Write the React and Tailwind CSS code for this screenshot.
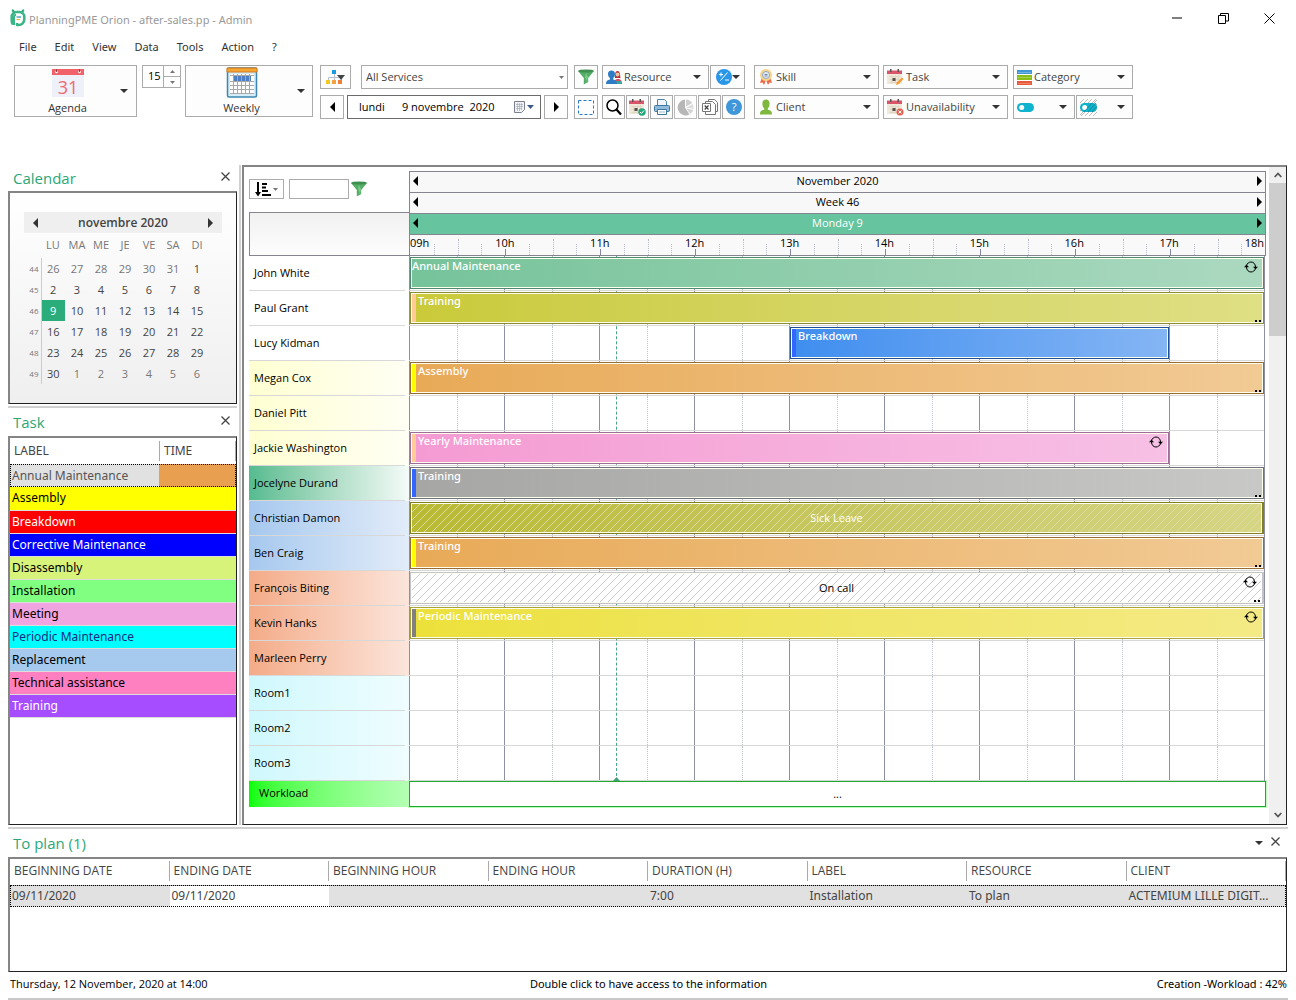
import { useState } from 'react'

const tasks = [
  { label: 'Assembly', row: 'bg-[#ffff00] text-black' },
  { label: 'Breakdown', row: 'bg-[#ff0000] text-white' },
  { label: 'Corrective Maintenance', row: 'bg-[#0000ff] text-white' },
  { label: 'Disassembly', row: 'bg-[#d7f37a] text-black' },
  { label: 'Installation', row: 'bg-[#80ff80] text-black' },
  { label: 'Meeting', row: 'bg-[#f0a5e0] text-black' },
  { label: 'Periodic Maintenance', row: 'bg-[#00ffff] text-[#1a2a80]' },
  { label: 'Replacement', row: 'bg-[#a6c9ee] text-black' },
  { label: 'Technical assistance', row: 'bg-[#ff80c0] text-black' },
  { label: 'Training', row: 'bg-[#a64dff] text-white' },
]

const weeks = [
  { n: 44, days: [26, 27, 28, 29, 30, 31, 1] },
  { n: 45, days: [2, 3, 4, 5, 6, 7, 8] },
  { n: 46, days: [9, 10, 11, 12, 13, 14, 15] },
  { n: 47, days: [16, 17, 18, 19, 20, 21, 22] },
  { n: 48, days: [23, 24, 25, 26, 27, 28, 29] },
  { n: 49, days: [30, 1, 2, 3, 4, 5, 6] },
]

const yellow = 'bg-linear-to-r from-[#ffffd2] to-[#fffff4]'
const blue = 'bg-linear-to-r from-[#a6c8ee] to-[#e2ecf9]'
const orange = 'bg-linear-to-r from-[#f3ab88] to-[#fbe5db]'
const cyan = 'bg-linear-to-r from-[#cff8fd] to-[#effdff]'

// start and end are hours of the day
const resources = [
  { name: 'John White', bg: 'bg-white', bar: { label: 'Annual Maintenance', start: 9, end: 18, box: 'border-[#4f8a70]', fill: 'from-[#76c39a] to-[#abd9c0]', repeat: true } },
  { name: 'Paul Grant', bg: 'bg-white', bar: { label: 'Training', start: 9, end: 18, box: 'border-[#8c8c32]', fill: 'from-[#caca3a] to-[#dfdf84]', strip: 'bg-[#ffcc99]', dots: true } },
  { name: 'Lucy Kidman', bg: 'bg-white', bar: { label: 'Breakdown', start: 13, end: 17, box: 'border-[#1f4f96]', fill: 'from-[#3f8eef] to-[#84b5f4]', strip: 'bg-[#3366ff]' } },
  { name: 'Megan Cox', bg: yellow, bar: { label: 'Assembly', start: 9, end: 18, box: 'border-[#996b35]', fill: 'from-[#e8aa57] to-[#f1ca94]', strip: 'bg-[#ffff00]', dots: true } },
  { name: 'Daniel Pitt', bg: yellow },
  { name: 'Jackie Washington', bg: yellow, bar: { label: 'Yearly Maintenance', start: 9, end: 17, box: 'border-[#a06c98]', fill: 'from-[#f49bd3] to-[#f7c0e5]', strip: 'bg-[#ffcc99]', repeat: true } },
  { name: 'Jocelyne Durand', bg: 'bg-linear-to-r from-[#55bb90] to-[#f4fbf8]', bar: { label: 'Training', start: 9, end: 18, box: 'border-[#70707a]', fill: 'from-[#a6a6a5] to-[#c8c8c7]', strip: 'bg-[#3366ff]', dots: true } },
  { name: 'Christian Damon', bg: blue, bar: { label: 'Sick Leave', start: 9, end: 18, box: 'border-[#808022] border-r-2', fill: 'from-[#b9b932] to-[#d5d584]', hatch: '#dcdca0', text: 'text-white' } },
  { name: 'Ben Craig', bg: blue, bar: { label: 'Training', start: 9, end: 18, box: 'border-[#996b35]', fill: 'from-[#e8aa57] to-[#f1ca94]', strip: 'bg-[#ffff00]', dots: true } },
  { name: 'François Biting', bg: orange, bar: { label: 'On call', start: 9, end: 18, box: 'border-[#c4c4c8] border-r-2', fill: 'from-white to-white', hatch: '#cbcbcb', text: 'text-black', repeat: true, dots: true } },
  { name: 'Kevin Hanks', bg: orange, bar: { label: 'Periodic Maintenance', start: 9, end: 18, box: 'border-[#aaa43c]', fill: 'from-[#ece13a] to-[#f4ea85]', strip: 'bg-[#808080]', repeat: true } },
  { name: 'Marleen Perry', bg: orange },
  { name: 'Room1', bg: cyan },
  { name: 'Room2', bg: cyan },
  { name: 'Room3', bg: cyan },
]

const hours = ['09h', '10h', '11h', '12h', '13h', '14h', '15h', '16h', '17h', '18h']

const planColumns = ['BEGINNING DATE', 'ENDING DATE', 'BEGINNING HOUR', 'ENDING HOUR', 'DURATION (H)', 'LABEL', 'RESOURCE', 'CLIENT']
const planRow = ['09/11/2020', '09/11/2020', '', '', '7:00', 'Installation', 'To plan', 'ACTEMIUM LILLE DIGIT...']

/* ---------- Icons ---------- */

function Caret({ className = 'text-[#333]' }) {
  return (
    <svg width="8" height="4" viewBox="0 0 8 4" className={`shrink-0 ${className}`}>
      <path d="M0 0h8L4 4z" fill="currentColor" />
    </svg>
  )
}

function SmallCaret({ up }) {
  return (
    <svg width="5" height="3" viewBox="0 0 5 3" className="shrink-0">
      <path d={up ? 'M0 3h5L2.5 0z' : 'M0 0h5L2.5 3z'} fill="#777" />
    </svg>
  )
}

function Arrow({ dir = 'left', className = 'text-black' }) {
  return (
    <svg width="5" height="10" viewBox="0 0 5 10" className={`shrink-0 ${className}`}>
      <path d={dir === 'left' ? 'M5 0v10L0 5z' : 'M0 0v10l5-5z'} fill="currentColor" />
    </svg>
  )
}

function Close() {
  return (
    <svg width="9" height="9" viewBox="0 0 9 9">
      <path d="M.5.5l8 8M8.5.5l-8 8" stroke="#444" strokeWidth="1.3" />
    </svg>
  )
}

function AppLogo() {
  return (
    <svg width="16" height="18" viewBox="0 0 16 18">
      <path d="M2.800 1.500l1.500 2M13.200 1.500l-1.500 2" stroke="#2fae7c" strokeWidth="2.200" strokeLinecap="round" />
      <path d="M3 15.500A6.500 6.500 0 0 1 1.700 11V8a5 5 0 0 1 5-5h2.600a5 5 0 0 1 5 5v2.500a5.500 5.500 0 0 1-5.500 5.500H7v-2" fill="none" stroke="#3bb487" strokeWidth="2.600" strokeLinejoin="round" />
      <path d="M4 16V8a2 2 0 0 1 2-2" fill="none" stroke="#3bb487" strokeWidth="2" />
      <path d="M6.500 8h4.500" stroke="#2f8fae" strokeWidth="1.200" />
      <path d="M6.500 10.500h3.500" stroke="#f2b233" strokeWidth="1.200" />
    </svg>
  )
}

function AgendaIcon() {
  return (
    <svg width="32" height="29" viewBox="0 0 32 29">
      <path d="M0 5h32v23H0z" fill="#eef0fa" />
      <path d="M0 0h32v6H0z" fill="#f0616a" />
      <circle cx="4.5" cy="3" r="1.3" fill="#fff" />
      <circle cx="27.5" cy="3" r="1.3" fill="#fff" />
      <path d="M4 0h1v3H4zM27 0h1v3h-1z" fill="#a33f4a" />
      <text x="16" y="25" textAnchor="middle" fontSize="18" fill="#ee6a6c" fontFamily="'Open Sans', sans-serif">31</text>
    </svg>
  )
}

function WeeklyIcon() {
  return (
    <svg width="32" height="31" viewBox="0 0 32 31">
      <rect x="1.500" y="1" width="29" height="29" rx="1.500" fill="#d3eefa" stroke="#3e86ad" strokeWidth="1.500" />
      <path d="M1 1h30v4H1z" fill="#f6a532" stroke="#cf7a1c" />
      <path d="M4 7h24v20H4z" fill="#fff" />
      <path d="M7 9h18v5H7z" fill="#4d7fc4" />
      <path d="M4 8.500h24M4 14.500h24M4 18.500h24M4 22.500h24M4 26.500h24M7.500 7v20M11.500 7v20M15.500 7v20M19.500 7v20M23.500 7v20" stroke="#a8a8a8" />
    </svg>
  )
}

function OrgIcon() {
  return (
    <svg width="19" height="16" viewBox="0 0 19 16">
      <path d="M2.500 11V8.500h13V11M8.500 4v7" fill="none" stroke="#b4c0cc" />
      <path d="M6 1h4v4H6z" fill="#1a9be0" />
      <path d="M0 11h4v4H0z" fill="#f5c722" />
      <path d="M6 11h4v4H6z" fill="#f5a142" />
      <path d="M12 11h4v4h-4z" fill="#f07f3a" />
      <path d="M11 6h8l-4 5z" fill="#444" />
    </svg>
  )
}

function Funnel() {
  return (
    <svg width="16" height="16" viewBox="0 0 16 16">
      <path d="M0 2l5.800 7v6.500L10.200 13V9L16 2z" fill="#55ae65" />
      <ellipse cx="8" cy="2" rx="7.800" ry="1.600" fill="#3f9050" />
      <path d="M7 8l1-4 2 4-1 5z" fill="#7cc88a" />
    </svg>
  )
}

function PeopleIcon() {
  return (
    <svg width="16" height="15" viewBox="0 0 16 15">
      <path d="M9 8c0-4 0-7 2.500-7S14 4 14.500 8z" fill="#b8303f" />
      <circle cx="11.500" cy="4.500" r="2" fill="#f2c29b" />
      <path d="M8 14c0-4 2-5 4-5s4 1 4 5z" fill="#d94b5c" />
      <path d="M10 11h5v3h-5z" fill="#3aa79a" />
      <path d="M0 14c0-3 1.500-4 4-4.500V8C2.500 7 2 5.500 2 4c0-2 1.200-3.500 3.500-3.500S9 2 9 4 8.500 7 7.200 8v1.500C9.500 10 11 11 11 14z" fill="#2f7bc4" />
    </svg>
  )
}

function PlusMinusIcon() {
  return (
    <svg width="16" height="16" viewBox="0 0 16 16">
      <circle cx="8" cy="8" r="8" fill="#2a96e8" />
      <path d="M4.500 11.500l7-8M3 5.500h4M5 3.500v4M9 11h4" stroke="#fff" />
    </svg>
  )
}

function SkillIcon() {
  return (
    <svg width="16" height="16" viewBox="0 0 16 16">
      <path d="M4 8l-2 6 2.500-.5L6 16l2-5 2 5 1.500-2.500L14 14l-2-6z" fill="#ee6a4a" />
      <circle cx="8" cy="6" r="6" fill="#f6d58a" />
      <circle cx="8" cy="6" r="3.500" fill="#e9eef5" stroke="#8fa6c4" />
      <path d="M6.500 5.500h3M6.500 7h3" stroke="#6d88ad" />
    </svg>
  )
}

function ClientIcon() {
  return (
    <svg width="16" height="16" viewBox="0 0 16 16">
      <path d="M2 15.500c0-3 1-4 4.200-4.700V9.500C4.900 8.500 4.400 6.500 4.400 4.500 4.400 2 6 .5 8 .5s3.600 1.500 3.600 4c0 2-.5 4-1.800 5v1.300C13 11.500 14 12.500 14 15.500z" fill="#7fb83f" />
    </svg>
  )
}

function CalendarIcon({ badge }) {
  return (
    <svg width="17" height="17" viewBox="0 0 17 17">
      <path d="M0 4h15v11H0z" fill="#f0e8d8" />
      <path d="M0 1.500h15v3.500H0z" fill="#d9566a" />
      <path d="M3 0h1.500v3H3zM10.500 0H12v3h-1.500z" fill="#555" />
      <path d="M2.500 7.500h10M2.500 10.500h10M2.500 13.500h10M5 6.500v8M8.500 6.500v8M11.500 6.500v8" stroke="#dfd6c3" />
      <path d="M5.500 9h3v3h-3z" fill="#55514b" />
      {badge === 'pen' && <path d="M9 16l.8-2.500L15 8.500 16.500 10l-5.200 5.200z" fill="#f39a2b" />}
      {badge === 'cross' && (
        <>
          <circle cx="13" cy="13" r="3.500" fill="#e8604f" />
          <path d="M11.500 11.500l3 3M14.500 11.500l-3 3" stroke="#fff" />
        </>
      )}
      {badge === 'check' && (
        <>
          <circle cx="13" cy="13" r="3.700" fill="#27a67e" />
          <path d="M11 13l1.500 1.500 2.500-3" fill="none" stroke="#fff" />
        </>
      )}
    </svg>
  )
}

function CategoryIcon() {
  return (
    <svg width="15" height="15" viewBox="0 0 15 15">
      <path d="M0 0h15v4H0z" fill="#3f97d6" />
      <path d="M0 5h15v5H0z" fill="#8abf17" />
      <path d="M0 11h15v4H0z" fill="#e8593a" />
      <path d="M1 2.500h13M1 7.500h13M1 13.500h13" stroke="#fff" strokeOpacity=".25" />
    </svg>
  )
}

function ToggleIcon({ hatched }) {
  return (
    <svg width="17" height="17" viewBox="0 0 17 17">
      {hatched && <path d="M0 4l4-4M0 8l8-8M0 12L12 0M0 16L16 0M1 17L17 1M5 17L17 5M9 17l8-8M13 17l4-4" stroke="#aaa" strokeWidth=".8" />}
      <rect x="0" y="4" width="17" height="9" rx="4.500" fill="#10b3cd" />
      <circle cx="4.700" cy="8.500" r="2.500" fill="#fff" />
      {hatched && <path d="M4 13l8-9M8 13l8-9M12 13l5-6" stroke="#0b7f92" strokeWidth=".8" />}
    </svg>
  )
}

function SelectionIcon() {
  return (
    <svg width="16" height="15" viewBox="0 0 16 15">
      <rect x=".5" y=".5" width="15" height="14" fill="none" stroke="#2878c8" strokeDasharray="3 2" />
    </svg>
  )
}

function MagnifierIcon() {
  return (
    <svg width="16" height="17" viewBox="0 0 16 17">
      <circle cx="6.500" cy="6.500" r="5.500" fill="none" stroke="#000" strokeWidth="1.500" />
      <path d="M10.500 10.500l4.500 5" stroke="#000" strokeWidth="2.200" />
    </svg>
  )
}

function PrinterIcon() {
  return (
    <svg width="16" height="16" viewBox="0 0 16 16">
      <path d="M3.500.5h7l2 2V7h-9z" fill="#eef5fb" stroke="#4d86b0" />
      <rect x=".5" y="6.500" width="15" height="6" rx="1" fill="#8fbbdc" stroke="#40759c" />
      <path d="M3.500 10.500h9v5h-9z" fill="#fff" stroke="#40759c" />
      <path d="M5 13h6" stroke="#8fbbdc" />
    </svg>
  )
}

function PieIcon() {
  return (
    <svg width="17" height="17" viewBox="0 0 17 17">
      <path d="M8 8.500V.5a8 8 0 1 0 4.500 15z" fill="#a6a6a6" />
      <path d="M9 7.500V.5a8 8 0 0 1 6.300 3.500z" fill="#c4c4c4" />
      <path d="M9.500 8.500l6.300-3.500a8 8 0 0 1 .7 5z" fill="#d6d6d6" />
      <path d="M9.300 9.500l7 1.500a8 8 0 0 1-3 4z" fill="#c9c9c9" />
    </svg>
  )
}

function ExcelIcon() {
  return (
    <svg width="16" height="16" viewBox="0 0 16 16">
      <path d="M6.500 2V.5h6l3 3v9H14" fill="#fff" stroke="#777" />
      <path d="M3.500 5V2.500h7l3 3v10h-10V13" fill="#fff" stroke="#777" />
      <path d="M.5 4.500h8v8h-8z" fill="#fff" stroke="#777" />
      <path d="M2.700 6.500l3.800 4M6.500 6.500l-3.800 4" stroke="#444" strokeWidth="1.200" />
    </svg>
  )
}

function HelpIcon() {
  return (
    <svg width="16" height="16" viewBox="0 0 16 16">
      <circle cx="8" cy="8" r="8" fill="#3d97d8" />
      <text x="8" y="12" textAnchor="middle" fontSize="11" fill="#fff" fontFamily="'Open Sans', sans-serif">?</text>
    </svg>
  )
}

function DateIcon() {
  return (
    <svg width="20" height="12" viewBox="0 0 20 12" className="shrink-0">
      <path d="M.5.5h10v8l-3 3h-7z" fill="#f2f3f6" stroke="#7a7f8c" />
      <path d="M2 3.500h7M2 5.500h7M2 7.500h6M3.500 2v8M5.500 2v8M7.500 2v7" stroke="#a9adba" strokeWidth=".7" />
      <path d="M13 4h7l-3.500 4z" fill="#3d5a8a" />
    </svg>
  )
}

function SortIcon() {
  return (
    <svg width="16" height="15" viewBox="0 0 16 15">
      <path d="M2 0h2v10h2L3 14.500 0 10h2zM7 1h5v2H7zM7 4.500h4v2H7zM7 8h6v2H7zM7 12h9v2H7z" fill="#000" />
    </svg>
  )
}

function RepeatIcon() {
  return (
    <svg width="14" height="12" viewBox="0 0 14 12">
      <path d="M2.500 4.500C3 2.500 5 1 7 1c2.500 0 4.500 2 4.500 5M11.500 7.500C11 9.500 9 11 7 11c-2.500 0-4.500-2-4.500-5" fill="none" stroke="#000" />
      <path d="M0 6.200L2.500 3.500 5 6.200zM9 5.800h5L11.500 8.500z" fill="#000" />
    </svg>
  )
}

function Hatch({ id, color }) {
  return (
    <svg aria-hidden="true" className="absolute inset-0 size-full">
      <defs>
        <pattern id={id} width="8" height="8" patternUnits="userSpaceOnUse">
          <path d="M-1 9L9-1" stroke={color} strokeWidth="1" />
        </pattern>
      </defs>
      <rect width="100%" height="100%" fill={`url(#${id})`} />
    </svg>
  )
}

/* ---------- Toolbar pieces ---------- */

function IconButton({ label, className = 'w-6', children }) {
  return (
    <button aria-label={label} className={`flex h-6 items-center justify-center border border-[#ababab] bg-[#fdfdfd] ${className}`}>
      {children}
    </button>
  )
}

function PickList({ label, icon, className = '', text = true }) {
  return (
    <label className={`flex h-6 items-center gap-[2px] border border-[#ababab] bg-[#fdfdfd] pr-[7px] pl-[3px] ${className}`}>
      {icon}
      <select aria-label={label} className="min-w-0 flex-1 appearance-none bg-transparent text-[#444] outline-none">
        <option>{text ? label : ''}</option>
      </select>
      <Caret />
    </label>
  )
}

function Toolbar() {
  return (
    <div className="flex items-start pl-[14px] text-[11px] text-[#333]">
      <button className="flex h-[52px] w-[123px] items-center border border-[#ababab] bg-[#fdfdfd] pr-2">
        <span className="flex h-full flex-1 flex-col items-center justify-end gap-[2px]">
          <AgendaIcon />
          <span className="leading-4">Agenda</span>
        </span>
        <Caret />
      </button>
      <div className="ml-[5px] flex h-[23px] w-[39px] border border-[#ababab]">
        <input aria-label="Interval" defaultValue="15" className="w-5 min-w-0 pl-[5px] text-[11px] text-black outline-none" />
        <div className="flex flex-1 flex-col border-l border-[#ababab]">
          <button aria-label="More" className="flex flex-1 items-center justify-center border-b border-[#ababab]">
            <SmallCaret up />
          </button>
          <button aria-label="Less" className="flex flex-1 items-center justify-center">
            <SmallCaret />
          </button>
        </div>
      </div>
      <button className="ml-1 flex h-[52px] w-[128px] items-center border border-[#ababab] bg-[#fdfdfd] pr-[7px]">
        <span className="flex h-full flex-1 flex-col items-center justify-end gap-[2px]">
          <WeeklyIcon />
          <span className="leading-4">Weekly</span>
        </span>
        <Caret />
      </button>

      <div className="ml-[7px] flex w-[248px] flex-col gap-[6px]">
        <div className="flex gap-[10px]">
          <IconButton label="Departments" className="w-[31px]"><OrgIcon /></IconButton>
          <label className="flex h-6 flex-1 items-center border border-[#ababab] pr-[3px] pl-1">
            <select aria-label="Services" className="min-w-0 flex-1 appearance-none text-[#444] outline-none">
              <option>All Services</option>
            </select>
            <SmallCaret />
          </label>
        </div>
        <div className="flex gap-[3px]">
          <IconButton label="Previous"><Arrow /></IconButton>
          <label className="flex h-6 min-w-0 flex-1 items-center border border-[#6b6b6b] pr-[6px] pl-[11px]">
            <input aria-label="Date" defaultValue={'lundi      9 novembre  2020'} className="min-w-0 flex-1 text-black outline-none" />
            <DateIcon />
          </label>
          <IconButton label="Next"><Arrow dir="right" /></IconButton>
        </div>
      </div>

      <div className="ml-[6px] flex flex-col gap-[6px]">
        <IconButton label="Filter"><Funnel /></IconButton>
        <IconButton label="Select area"><SelectionIcon /></IconButton>
      </div>

      <div className="ml-1 flex flex-col gap-[6px]">
        <div className="flex gap-px">
          <PickList label="Resource" icon={<PeopleIcon />} className="w-[107px]" />
          <IconButton label="Plus or minus" className="w-[35px]"><PlusMinusIcon /><Caret /></IconButton>
        </div>
        <div className="flex gap-px">
          <IconButton label="Search" className="w-[23px]"><MagnifierIcon /></IconButton>
          <IconButton label="Validate" className="w-[23px]"><CalendarIcon badge="check" /></IconButton>
          <IconButton label="Print" className="w-[23px]"><PrinterIcon /></IconButton>
          <IconButton label="Statistics" className="w-[23px] opacity-80"><PieIcon /></IconButton>
          <IconButton label="Export" className="w-[23px]"><ExcelIcon /></IconButton>
          <IconButton label="Help" className="w-[23px]"><HelpIcon /></IconButton>
        </div>
      </div>

      <div className="ml-[9px] flex w-[125px] flex-col gap-[6px]">
        <PickList label="Skill" icon={<SkillIcon />} />
        <PickList label="Client" icon={<ClientIcon />} />
      </div>
      <div className="ml-1 flex w-[125px] flex-col gap-[6px]">
        <PickList label="Task" icon={<CalendarIcon badge="pen" />} />
        <PickList label="Unavailability" icon={<CalendarIcon badge="cross" />} />
      </div>
      <div className="ml-[5px] flex w-[120px] flex-col gap-[6px]">
        <PickList label="Category" icon={<CategoryIcon />} />
        <div className="flex gap-px">
          <PickList label="Enabled" text={false} icon={<ToggleIcon />} className="w-[62px]" />
          <PickList label="Hatching" text={false} icon={<ToggleIcon hatched />} className="w-[57px]" />
        </div>
      </div>
    </div>
  )
}

/* ---------- Panels ---------- */

function PanelTitle({ children, actions, className = 'h-7' }) {
  return (
    <div className={`flex items-center justify-between pr-[7px] pl-[5px] ${className}`}>
      <h2 className="text-[15px] leading-5 text-[#2ba877]">{children}</h2>
      <div className="flex items-center gap-2">
        {actions}
        <button aria-label="Close panel" className="pb-[3px]"><Close /></button>
      </div>
    </div>
  )
}

const sunken = 'border-t-2 border-l-2 border-r border-b border-t-[#858585] border-l-[#858585] border-r-[#222] border-b-[#222]'

function MiniCalendar() {
  return (
    <div className={`h-[213px] bg-linear-to-b from-white to-[#efefef] pt-[19px] pr-[14px] pl-[14px] ${sunken}`}>
      <div className="flex h-[21px] items-center justify-between bg-[#efefef] px-[9px] text-xs font-semibold text-[#444]">
        <button aria-label="Previous month"><Arrow className="text-[#333]" /></button>
        novembre 2020
        <button aria-label="Next month"><Arrow dir="right" className="text-[#333]" /></button>
      </div>
      <table className="text-center text-[11px] text-[#444]">
        <thead>
          <tr className="h-[25px] text-[#777]">
            <th className="w-[17px]"></th>
            {['LU', 'MA', 'ME', 'JE', 'VE', 'SA', 'DI'].map((d) => (
              <th key={d} className="w-6 font-normal">{d}</th>
            ))}
          </tr>
        </thead>
        <tbody>
          {weeks.map((week, w) => (
            <tr key={week.n} className="h-[21px]">
              <td className="border-r border-[#ccc] pr-[2px] text-right text-[8px] text-[#777]">{week.n}</td>
              {week.days.map((day, d) => {
                const outside = (w === 0 && d < 6) || (w === 5 && d > 0)
                const selected = w === 2 && d === 0
                return (
                  <td key={d} className={`leading-4 ${selected ? 'bg-[#2bad7b] text-white' : outside ? 'text-[#777]' : ''}`}>
                    {day}
                  </td>
                )
              })}
            </tr>
          ))}
        </tbody>
      </table>
    </div>
  )
}

function TaskList() {
  return (
    <div className={`min-h-[388px] flex-1 bg-white font-['Noto_Sans',sans-serif] ${sunken}`}>
      <table className="w-full table-fixed border-collapse text-left text-xs">
        <thead>
          <tr className="h-[25px] text-[#444]">
            <th className="w-[149px] pl-1 font-normal">LABEL</th>
            <th className="py-[3px] font-normal"><div className="border-x border-[#aaa] pl-1 leading-5">TIME</div></th>
          </tr>
        </thead>
        <tbody>
          <tr className="h-[23px] outline-1 -outline-offset-1 outline-dotted outline-black">
            <td className="bg-[#e1e1e1] pl-[2px] leading-[22px] text-[#555]">Annual Maintenance</td>
            <td className="bg-[#e8a050]"></td>
          </tr>
          {tasks.map((t) => (
            <tr key={t.label} className={`h-[23px] border-b border-[#ddd] ${t.row}`}>
              <td className="pl-[2px] leading-[22px]">{t.label}</td>
              <td></td>
            </tr>
          ))}
        </tbody>
      </table>
    </div>
  )
}

function HeaderBand({ children, className }) {
  return (
    <div className={`flex h-[21px] items-center justify-between border-t border-[#85858f] px-[3px] pb-[2px] ${className}`}>
      <button aria-label="Previous"><Arrow /></button>
      {children}
      <button aria-label="Next"><Arrow dir="right" /></button>
    </div>
  )
}

function HourScale() {
  return (
    <div className="grid h-[22px] border-y border-[#85858f] bg-[#f9f9f9]">
      <div className="col-start-1 row-start-1 flex pr-px leading-4 text-black">
        {hours.map((h, i) => (
          <span key={h} className={i === 0 ? 'flex-[0.5]' : i === 9 ? 'flex-[0.5] text-right' : 'flex-1 text-center'}>
            {h}
          </span>
        ))}
      </div>
      <div className="col-start-1 row-start-1 grid grid-cols-[repeat(36,minmax(0,1fr))] items-end">
        {Array.from({ length: 36 }, (_, i) => (
          <span
            key={i}
            className={
              i === 0
                ? ''
                : i % 4 === 0
                  ? 'h-[6px] border-l border-[#7f889c]'
                  : i % 2 === 0
                    ? 'h-4 border-l border-dotted border-[#b4bccb]'
                    : 'h-[11px] border-l border-dotted border-[#b4bccb]'
            }
          />
        ))}
      </div>
    </div>
  )
}

function Bar({ bar }) {
  const place = { gridColumn: `${(bar.start - 9) * 2 + 1} / ${(bar.end - 9) * 2 + 1}` }
  return (
    <div style={place} className={`z-10 row-start-1 my-px ml-px flex border bg-[#ffffee] p-px ${bar.box}`}>
      {bar.strip && <div className={`w-1 ${bar.strip}`} />}
      <div className={`relative flex min-w-0 flex-1 bg-linear-to-r ${bar.fill}`}>
        {bar.hatch ? (
          <>
            <Hatch id={`hatch-${bar.start}-${bar.text}`} color={bar.hatch} />
            <span className={`relative flex-1 self-center text-center text-[11px] ${bar.text}`}>{bar.label}</span>
          </>
        ) : (
          <span className={`font-['Noto_Sans',sans-serif] text-[11px] leading-[14px] font-medium text-white ${bar.strip ? 'pl-[2px]' : ''}`}>
            {bar.label}
          </span>
        )}
        {bar.repeat && <span className="absolute top-[2px] right-1"><RepeatIcon /></span>}
        {bar.dots && (
          <span className="absolute right-px bottom-0 flex gap-[2px]">
            <i className="size-[2px] bg-black" />
            <i className="size-[2px] bg-black" />
          </span>
        )}
      </div>
    </div>
  )
}

function Schedule() {
  return (
    <main className={`flex min-w-0 flex-1 bg-white ${sunken}`}>
      <div className="min-w-0 flex-1 pt-1 pr-[3px] pb-[17px] pl-[5px] text-[11px] text-black">
        <div className="flex">
          <div className="flex w-[160px] shrink-0 flex-col justify-between">
            <div className="flex items-center pt-2">
              <button aria-label="Sort" className="flex h-5 w-[35px] items-center justify-center gap-[2px] border border-[#ababab] bg-[#fdfdfd]">
                <SortIcon />
                <SmallCaret />
              </button>
              <input aria-label="Filter resources" className="ml-[5px] h-5 w-[60px] border border-[#ababab] px-1 outline-none" />
              <button aria-label="Apply filter" className="ml-[2px]"><Funnel /></button>
            </div>
            <div className="h-11 border-y border-l border-[#85858f] bg-linear-to-b from-[#f1f1f1] to-[#fdfdfd]" />
          </div>
          <div className="min-w-0 flex-1 border-x border-[#85858f]">
            <HeaderBand className="bg-[#f8f8f8]">November 2020</HeaderBand>
            <HeaderBand className="bg-[#f8f8f8]">Week 46</HeaderBand>
            <HeaderBand className="bg-[#66c49e] font-medium text-white">Monday 9</HeaderBand>
            <HourScale />
          </div>
        </div>

        <div className="flex">
          <div className="w-[160px] shrink-0">
            {resources.map((r) => (
              <div key={r.name} className={`h-[35px] pr-1 ${r.bg}`}>
                <div className="h-full border-b border-[#d8d8d8] pl-[5px] leading-[34px]">{r.name}</div>
              </div>
            ))}
          </div>
          <div className="relative mr-px min-w-0 flex-1 border-r border-[#8b91a3]">
            {resources.map((r) => (
              <div key={r.name} className="grid h-[35px] grid-cols-[repeat(18,minmax(0,1fr))] grid-rows-1 border-b border-[#d8d8d8]">
                {Array.from({ length: 18 }, (_, i) => (
                  <span
                    key={i}
                    style={{ gridColumn: i + 1 }}
                    className={i % 2 === 0 ? 'row-start-1 border-l border-[#8b91a3]' : 'row-start-1 border-l border-dotted border-[#bcc4d0]'}
                  />
                ))}
                {r.bar && <Bar bar={r.bar} />}
              </div>
            ))}
            {/* current time */}
            <div className="absolute inset-y-0 left-[24.2%] border-l border-dashed border-[#4aa583]">
              <svg width="7" height="4" viewBox="0 0 7 4" className="absolute bottom-0 -left-1"><path d="M0 4h7L3.500 0z" fill="#3f9f79" /></svg>
            </div>
          </div>
        </div>

        <div className="flex h-[26px]">
          <div className="w-[160px] shrink-0 bg-linear-to-r from-[#00ff00] to-[#b4ffb4] pl-[10px] leading-6">Workload</div>
          <div className="flex-1 border border-[#22a82c] text-center leading-6 outline-1 outline-[#b8ffb8]">...</div>
        </div>
      </div>
      <div className="flex w-[17px] shrink-0 flex-col items-center bg-[#f0f0f0]">
        <button aria-label="Scroll up" className="flex h-4 w-full items-center justify-center">
          <svg width="8" height="6" viewBox="0 0 8 6"><path d="M.7 5L4 1.500 7.300 5" fill="none" stroke="#555" strokeWidth="1.800" /></svg>
        </button>
        <div className="h-[153px] w-full bg-[#cdcdcd]" />
        <button aria-label="Scroll down" className="mt-auto flex h-[18px] w-full items-center justify-center">
          <svg width="8" height="6" viewBox="0 0 8 6"><path d="M.7 1L4 4.500 7.300 1" fill="none" stroke="#555" strokeWidth="1.800" /></svg>
        </button>
      </div>
    </main>
  )
}

function PlanTable() {
  return (
    <div className={`min-h-[114px] flex-1 bg-white ${sunken}`}>
      <table className="w-full table-fixed border-collapse text-left text-xs text-[#444]">
        <thead>
          <tr className="h-[26px] border-b border-[#aaa]">
            {planColumns.map((c) => (
              <th key={c} className="pt-[2px] pb-[3px] font-normal"><div className="border-r border-[#aaa] pl-1 leading-5">{c}</div></th>
            ))}
          </tr>
        </thead>
        <tbody className="font-['Noto_Sans',sans-serif]">
          <tr className="h-[22px] bg-[#e1e1e1] outline-1 -outline-offset-1 outline-dotted outline-black">
            {planRow.map((v, i) => (
              <td key={i} className={`truncate pl-[2px] leading-5 ${i === 1 ? 'bg-white' : ''}`}>{v}</td>
            ))}
          </tr>
        </tbody>
      </table>
    </div>
  )
}

export default function App() {
  const [showPlan, setShowPlan] = useState(true)

  return (
    <div className="flex min-h-screen flex-col bg-white font-['Open_Sans',sans-serif]">
      {/* Title bar */}
      <header className="flex h-9 items-center pr-1 pl-[10px]">
        <AppLogo />
        <h1 className="flex-1 pt-1 pl-[3px] font-['Noto_Sans',sans-serif] text-[11px] text-[#999]">PlanningPME Orion - after-sales.pp - Admin</h1>
        <button aria-label="Minimize" className="flex h-7 w-[46px] items-center justify-center">
          <svg width="10" height="2" viewBox="0 0 10 2"><path d="M0 1h10" stroke="#000" /></svg>
        </button>
        <button aria-label="Restore" className="flex h-7 w-[46px] items-center justify-center">
          <svg width="11" height="11" viewBox="0 0 11 11"><path d="M.5 2.500h7v8h-7zM2.500 2.500v-2h8v7.500h-3" fill="none" stroke="#000" /></svg>
        </button>
        <button aria-label="Close" className="flex h-7 w-[46px] items-center justify-center">
          <svg width="11" height="11" viewBox="0 0 11 11"><path d="M.5.5l10 10M10.500.5l-10 10" stroke="#000" /></svg>
        </button>
      </header>

      <nav className="flex h-[29px] items-start gap-[18px] pt-[3px] pl-[19px] font-['Noto_Sans',sans-serif] text-[11px] leading-4 text-[#333]">
        {['File', 'Edit', 'View', 'Data', 'Tools', 'Action', '?'].map((m) => (
          <button key={m}>{m}</button>
        ))}
      </nav>

      <Toolbar />

      <div className="mt-[46px] flex pr-[9px] pl-2">
        <aside className="flex w-[229px] shrink-0 flex-col">
          <PanelTitle className="h-[26px]">Calendar</PanelTitle>
          <MiniCalendar />
          <div className="mt-[2px] h-[2px] bg-[#d0d0d0]" />
          <PanelTitle>Task</PanelTitle>
          <TaskList />
        </aside>
        <div className="mr-px ml-[2px] w-[2px] shrink-0 bg-[#d0d0d0]" />
        <Schedule />
      </div>

      <div className="mx-2 mt-[2px] h-[2px] bg-[#d0d0d0]" />
      <section className="flex flex-1 flex-col pr-[9px] pl-2">
        <PanelTitle
          actions={
            <button aria-label="Collapse" onClick={() => setShowPlan(!showPlan)}><Caret /></button>
          }
        >
          To plan (1)
        </PanelTitle>
        {showPlan && <PlanTable />}
      </section>

      <footer className="mx-2 grid h-7 grid-cols-3 items-center border-b-2 border-[#c8c8c8] pr-px pb-[2px] pl-[2px] text-[11px] text-black">
        <span>Thursday, 12 November, 2020 at 14:00</span>
        <span className="text-center font-['Noto_Sans',sans-serif]">Double click to have access to the information</span>
        <span className="text-right font-['Noto_Sans',sans-serif]">Creation -Workload : 42%</span>
      </footer>
    </div>
  )
}
